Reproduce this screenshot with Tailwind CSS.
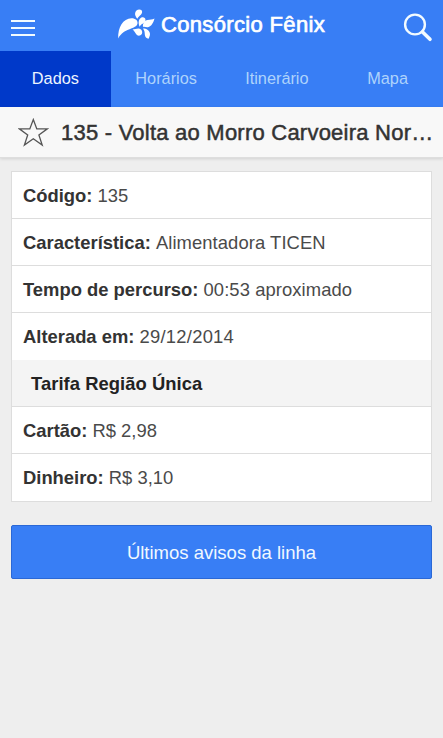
<!DOCTYPE html>
<html lang="pt-BR">
<head>
<meta charset="utf-8">
<meta name="viewport" content="width=device-width, initial-scale=1">
<title>Consórcio Fênix</title>
<script src="https://cdn.jsdelivr.net/npm/@tailwindcss/browser@4"></script>
</head>
<body class="flex h-screen flex-col overflow-hidden bg-[#eeeeee] font-['Liberation_Sans',Arial,sans-serif] text-[18.4px] text-[#4a4a4a]">
  <header class="flex h-[51px] shrink-0 items-center justify-between bg-[#387ef5] pr-[10px] pl-[11px] text-white">
    <button class="flex w-[24px] flex-col gap-[5px] pt-[4px]" aria-label="Menu">
      <span class="h-[2px] w-full bg-[#f2fbff]"></span>
      <span class="h-[2px] w-full bg-[#f2fbff]"></span>
      <span class="h-[2px] w-full bg-[#f2fbff]"></span>
    </button>
    <div class="flex items-center gap-[6px] pb-[2px] pl-[4px]">
      <svg class="h-[32px] w-[38px]" viewBox="0 0 38 32" fill="#fff">
        <path d="M1.200 29.500C0.800 18 6 9.500 14.500 9.200C18.500 9.200 21 11.500 20.500 14.500C19.500 20.500 7 18.500 1.200 29.500Z"/>
        <path d="M20.300 9.700C17.500 6.500 17.500 3.500 19.500 1.500C21 0 23.500 0 24.800 1.500C26.300 5 22.300 6.500 20.300 9.700Z"/>
        <path d="M22.600 17.800C21 14 21.500 10.500 24 8.800C26 7.700 28.500 8.500 28.500 11C28.500 14.500 24 14.500 22.600 17.800Z"/>
        <path d="M26 18C25.500 14.500 27.500 11.500 30.500 11C33.500 10.800 35 10.500 37.500 9.500C36.500 13.500 34.500 17.500 31 18.200C29 18.500 27.500 17.500 26 18Z"/>
        <path d="M15.500 20.500C18.500 20.500 21.500 18.500 24 20.500C26 22.500 25.500 25.800 23 26.500C19 27.500 18.500 22.500 15.500 20.500Z"/>
        <path d="M26 19.500C29.500 19.500 32.800 21.500 33 25C33 27 32 29 31.500 29.700C29.500 29.500 28 28 27.800 25.500C27.700 23 27.500 21.500 26 19.500Z"/>
      </svg>
      <h1 class="text-[22px] leading-[30px] tracking-[0.35px] whitespace-nowrap [-webkit-text-stroke:0.7px_#fff]">Consórcio Fênix</h1>
    </div>
    <button aria-label="Buscar" class="pt-[4px]">
      <svg class="h-[30px] w-[30px]" viewBox="0 0 30 30" fill="none" stroke="#f2fbff">
        <circle cx="12" cy="11.500" r="9.900" stroke-width="2.400"/>
        <path d="M19.500 19L27 26.300" stroke-width="3.600" stroke-linecap="round"/>
      </svg>
    </button>
  </header>
  <nav class="grid h-[56px] shrink-0 grid-cols-4 bg-[#387ef5] text-center text-[16.3px] leading-[54px] text-[#aed3fc]">
    <a class="bg-[#0039c9] text-[#edf5ff]">Dados</a>
    <a>Horários</a>
    <a>Itinerário</a>
    <a>Mapa</a>
  </nav>
  <section class="flex h-[51px] shrink-0 items-center border-b border-[#dedede] bg-[#f8f8f8] pl-[18px] shadow-[0_1px_3px_rgba(0,0,0,0.12)]">
    <svg class="h-[30px] w-[31px] shrink-0" viewBox="0 0 31 30" fill="none" stroke="#555" stroke-width="1.300">
      <path d="M15.300 2.500L18.800 11.900H29.300L20.900 17.900L24.200 28L15.300 21.700L6.400 28L9.700 17.900L1.300 11.900H11.800Z"/>
    </svg>
    <h2 class="ml-[12px] pt-[2px] text-[22px] leading-[30px] tracking-[0.23px] whitespace-nowrap text-[#333] [-webkit-text-stroke:0.5px_#333]">135 - Volta ao Morro Carvoeira Nor…</h2>
  </section>
  <main class="px-[11px] pt-[13px]">
    <div class="grid h-[331px] grid-rows-7 border border-[#dddddd] bg-white leading-[48px] [&_b]:text-[#333]">
      <p class="border-b border-[#dddddd] pl-[11px]"><b>Código:</b> 135</p>
      <p class="border-b border-[#dddddd] pl-[11px]"><b>Característica:</b> <span class="tracking-[0.08px]">Alimentadora TICEN</span></p>
      <p class="border-b border-[#dddddd] pl-[11px]"><b>Tempo de percurso:</b> <span class="tracking-[0.08px]">00:53 aproximado</span></p>
      <p class="pl-[11px]"><b>Alterada em:</b> <span class="tracking-[0.25px]">29/12/2014</span></p>
      <h3 class="border-b border-[#dddddd] bg-[#f4f4f4] pl-[19px] font-bold tracking-[0.05px] text-[#222]">Tarifa Região Única</h3>
      <p class="border-b border-[#dddddd] pl-[11px]"><b>Cartão:</b> R$ 2,98</p>
      <p class="pl-[11px]"><b>Dinheiro:</b> R$ 3,10</p>
    </div>
    <button class="mt-[23px] h-[54px] w-full rounded-[2px] border border-[#2a68d6] bg-[#387ef5] pt-[2px] text-[18.5px] text-[#f0f8ff]">Últimos avisos da linha</button>
  </main>
</body>
</html>
